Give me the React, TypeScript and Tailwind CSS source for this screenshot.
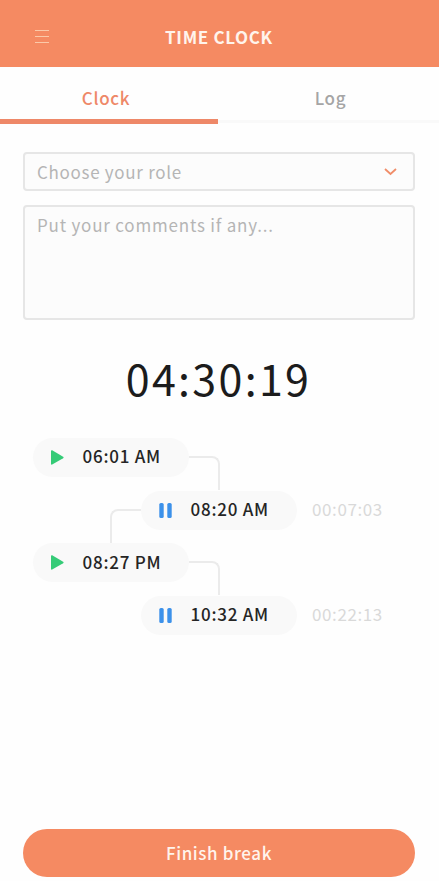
import { useState } from 'react';

type EntryKind = 'start' | 'break';

interface TimeEntry {
  kind: EntryKind;
  time: string;
  duration?: string;
}

const entries: TimeEntry[] = [
  { kind: 'start', time: '06:01 AM' },
  { kind: 'break', time: '08:20 AM', duration: '00:07:03' },
  { kind: 'start', time: '08:27 PM' },
  { kind: 'break', time: '10:32 AM', duration: '00:22:13' },
];

function PlayIcon() {
  return (
    <svg className="h-[15px] w-[13px]" viewBox="0 0 13 15" fill="#35cb77">
      <path d="M0 1C0 .3.6 0 1.200.3l10.900 6.400c.6.4.6 1.100 0 1.500L1.200 14.600C.6 14.900 0 14.600 0 13.900z" />
    </svg>
  );
}

function PauseIcon() {
  return (
    <svg className="h-[15px] w-[13px]" viewBox="0 0 13 15" fill="#3c91ea">
      <rect x=".3" y="0" width="4.400" height="15" rx="1.600" />
      <rect x="8.300" y="0" width="4.400" height="15" rx="1.600" />
    </svg>
  );
}

function EntryRow({ entry, isFirst, isLast }: { entry: TimeEntry; isFirst: boolean; isLast: boolean }) {
  const isStart = entry.kind === 'start';

  return (
    <div className={`flex items-center ${isStart ? 'pl-[33px]' : 'pl-[141px]'}`}>
      <div className="relative flex h-[39px] w-[156px] items-center rounded-full bg-[#f9f9f9] pl-[18px]">
        {isStart ? <PlayIcon /> : <PauseIcon />}
        <span className="ml-[18.5px] -mt-[3px] text-[17px] font-medium tracking-[0.75px] text-[#252525]">
          {entry.time}
        </span>

        {/* Connectors to the neighbouring entries */}
        {isStart && !isLast && (
          <span className="absolute left-full top-[18px] h-[34px] w-[31px] rounded-tr-lg border-r-2 border-t-2 border-[#ebebeb]" />
        )}
        {!isStart && !isFirst && !isLast && (
          <span className="absolute right-full top-[18px] h-[35px] w-[31px] rounded-tl-lg border-l-2 border-t-2 border-[#ebebeb]" />
        )}
      </div>
      {entry.duration && (
        <span className="ml-[15px] -mt-[3px] text-[17px] tracking-[0.6px] text-[#d9d9d9]">{entry.duration}</span>
      )}
    </div>
  );
}

export default function App() {
  const [tab, setTab] = useState<'clock' | 'log'>('clock');

  return (
    <div className="flex h-[881px] w-full flex-col overflow-hidden bg-[#fefefe] font-['Noto_Sans_CJK_SC',sans-serif]">
      {/* Header */}
      <header className="grid h-[67px] shrink-0 grid-cols-[1fr_auto_1fr] items-center bg-[#f58a62] pt-[7px]">
        <button className="ml-[35px] flex w-[14px] flex-col gap-[5px] pb-[1px]" aria-label="Menu">
          <span className="h-px w-full bg-[#fbc9a9]" />
          <span className="h-px w-full bg-[#fbc9a9]" />
          <span className="h-px w-full bg-[#fbc9a9]" />
        </button>
        <h1 className="-mt-px pr-[1px] text-[17px] font-bold tracking-[0.65px] text-[#fff4ec]">TIME CLOCK</h1>
      </header>

      {/* Tabs */}
      <nav className="flex h-[57px] shrink-0">
        <button
          onClick={() => setTab('clock')}
          className={`w-[218px] border-b-[5px] pr-[6px] pt-[9px] text-[17px] font-medium tracking-[0.7px] ${
            tab === 'clock' ? 'border-[#ee8868] text-[#ee8868]' : 'border-[#f8f8f8] text-[#a5a5a5]'
          }`}
        >
          Clock
        </button>
        <button
          onClick={() => setTab('log')}
          className={`mb-[1px] flex-1 border-b-[3px] pl-[4px] pt-[8px] text-[17px] font-medium tracking-[0.7px] ${
            tab === 'log' ? 'border-[#ee8868] text-[#ee8868]' : 'border-[#f9f9f9] text-[#a5a5a5]'
          }`}
        >
          Log
        </button>
      </nav>

      {/* Form */}
      <div className="flex flex-col gap-[14px] pl-[23px] pr-[24px] pt-[28px]">
        <button className="flex h-[39px] items-center justify-between rounded-[4px] border-2 border-[#e6e6e6] bg-[#fcfcfc] pl-[12px] pr-[16px] text-[17px] tracking-[0.7px] text-[#b5b5b5]">
          Choose your role
          <svg className="h-[8px] w-[13px]" viewBox="0 0 13 8" fill="none" stroke="#f08d69" strokeWidth="1.800">
            <path d="M1 1l5.500 5 5.500-5" />
          </svg>
        </button>
        <textarea
          className="h-[115px] resize-none rounded-[4px] border-2 border-[#e6e6e6] bg-[#fcfcfc] px-[12px] pt-[5px] text-[17px] tracking-[0.8px] outline-none placeholder:text-[#b5b5b5]"
          placeholder="Put your comments if any..."
        />
      </div>

      {/* Timer */}
      <div className="mt-[25px] pr-[2px] text-center text-[43px] leading-[64px] tracking-[2.3px] text-[#1c1c1c]">04:30:19</div>

      {/* Entries */}
      <div className="mt-[29px] flex flex-col gap-[13.7px]">
        {entries.map((entry, i) => (
          <EntryRow key={entry.time} entry={entry} isFirst={i === 0} isLast={i === entries.length - 1} />
        ))}
      </div>

      <div className="mt-auto pb-[4px] pl-[23px] pr-[24px]">
        <button className="h-[48px] w-full rounded-full bg-[#f58a62] text-[17px] font-medium tracking-[0.6px] text-[#fff4ec]">
          Finish break
        </button>
      </div>
    </div>
  );
}
